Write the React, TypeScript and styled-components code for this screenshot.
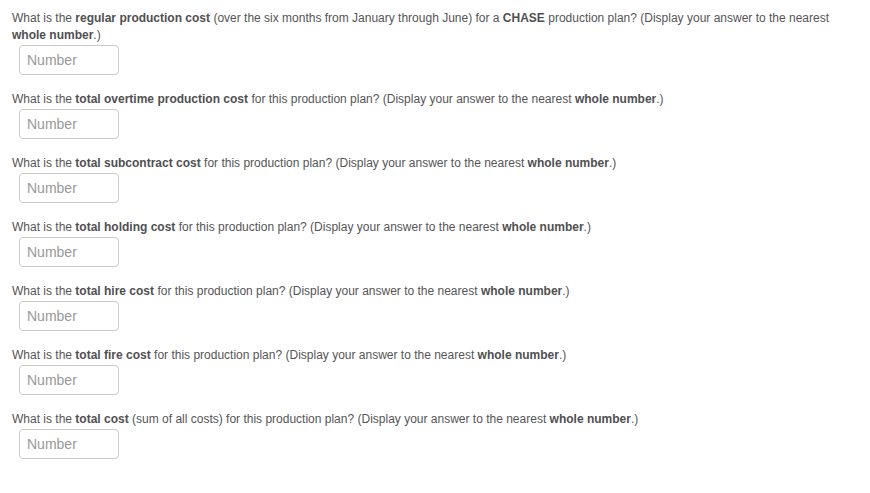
import * as React from "react";
import styled, { createGlobalStyle } from "styled-components";

const GlobalStyle = createGlobalStyle`
  body {
    margin: 0;
    background: #fff;
    font-family: "Liberation Sans", Arial, sans-serif;
  }
`;

const Page = styled.div`
  padding: 10px 0 0 12px;
  width: 835px;
`;

const Question = styled.div`
  margin-bottom: 16px;
`;

const Prompt = styled.p`
  margin: 0;
  font-size: 12px;
  line-height: 17px;
  color: #555;

  b {
    font-weight: bold;
    color: #505050;
  }
`;

const NumberInput = styled.input`
  display: block;
  box-sizing: border-box;
  width: 100px;
  height: 30px;
  margin: 1px 0 0 7px;
  padding: 4px 7px;
  border: 1px solid #ccc;
  border-radius: 4px;
  font-family: "Liberation Sans", Arial, sans-serif;
  font-size: 14px;
  color: #555;
  outline: none;

  &::placeholder {
    color: #999;
  }
`;

const questions: React.ReactNode[] = [
  <>
    What is the <b>regular production cost</b> (over the six months from January through June) for a{" "}
    <b>CHASE</b> production plan? (Display your answer to the nearest <b>whole number</b>.)
  </>,
  <>
    What is the <b>total overtime production cost</b> for this production plan? (Display your answer to the
    nearest <b>whole number</b>.)
  </>,
  <>
    What is the <b>total subcontract cost</b> for this production plan? (Display your answer to the nearest{" "}
    <b>whole number</b>.)
  </>,
  <>
    What is the <b>total holding cost</b> for this production plan? (Display your answer to the nearest{" "}
    <b>whole number</b>.)
  </>,
  <>
    What is the <b>total hire cost</b> for this production plan? (Display your answer to the nearest{" "}
    <b>whole number</b>.)
  </>,
  <>
    What is the <b>total fire cost</b> for this production plan? (Display your answer to the nearest{" "}
    <b>whole number</b>.)
  </>,
  <>
    What is the <b>total cost</b> (sum of all costs) for this production plan? (Display your answer to the
    nearest <b>whole number</b>.)
  </>
];

const App = () => (
  <>
    <GlobalStyle />
    <Page>
      {questions.map((q, i) => (
        <Question key={i}>
          <Prompt>{q}</Prompt>
          <NumberInput type="text" placeholder="Number" />
        </Question>
      ))}
    </Page>
  </>
);

export default App;
